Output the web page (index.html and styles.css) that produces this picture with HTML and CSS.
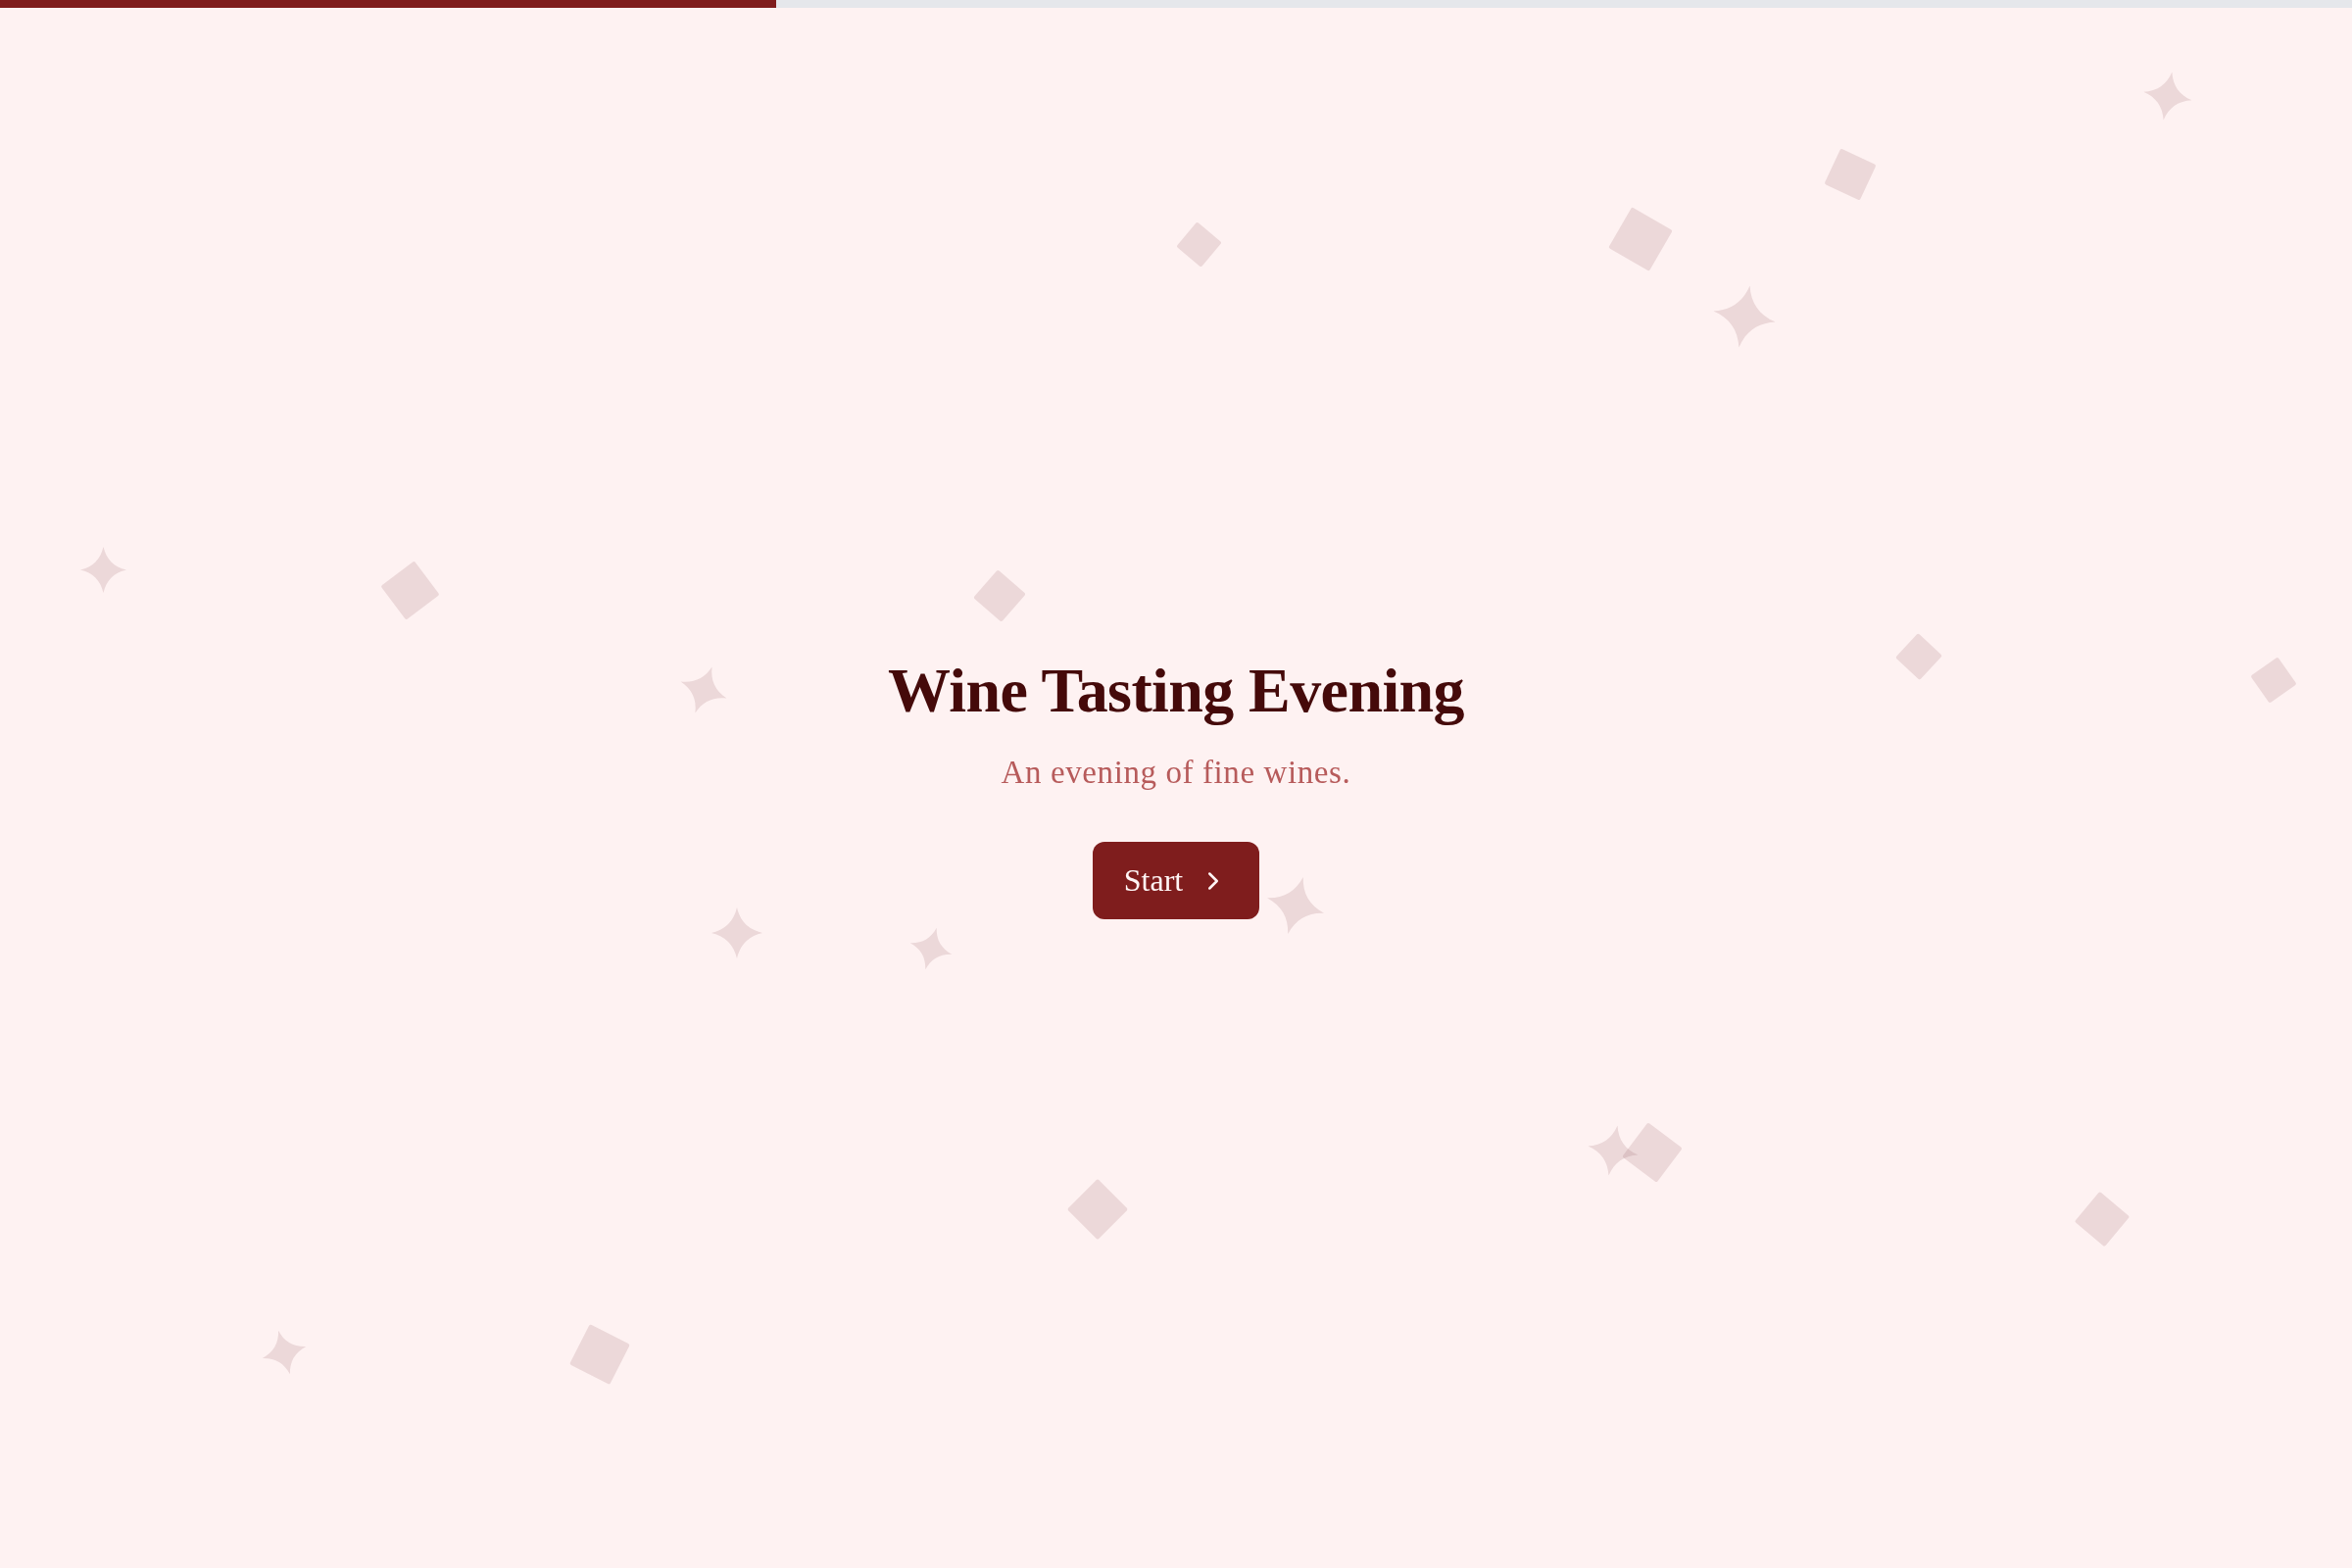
FILE: index.html
```html
<!DOCTYPE html>
<html lang="en">
<head>
    <meta charset="UTF-8">
    <meta name="viewport" content="width=device-width, initial-scale=1.0">
    <title>Wine Tasting Evening</title>
    <link rel="stylesheet" href="styles.css">
</head>
<body>
    <div class="progress">
        <div class="progress-fill"></div>
    </div>
    <div class="confetti" id="confetti"></div>
    <main class="intro">
        <h1>Wine Tasting Evening</h1>
        <p class="subtitle">An evening of fine wines.</p>
        <button class="start-btn">
            Start
            <svg viewBox="0 0 24 24" width="30" height="30" fill="none" stroke="currentColor" stroke-width="2" stroke-linecap="round" stroke-linejoin="round"><path d="m9 18 6-6-6-6"/></svg>
        </button>
    </main>
    <script>
        // [x, y, size, rotation] - centre of each shape
        const sparkles = [
            [2212, 98, 50, 10],
            [1780, 323, 64, 10],
            [105, 581, 47, 0],
            [718, 704, 50, 20],
            [1322, 924, 60, 15],
            [752, 952, 52, 0],
            [950, 968, 44, 15],
            [1646, 1174, 52, 10],
            [290, 1380, 46, -15]
        ];
        const squares = [
            [1888, 178, 40, 25],
            [1674, 244, 48, 30],
            [1223, 249, 33, 40],
            [418, 602, 43, 53],
            [1020, 608, 38, 41],
            [1958, 670, 34, 43],
            [2320, 694, 34, -35],
            [1686, 1176, 44, 37],
            [1120, 1234, 44, 45],
            [2145, 1244, 40, 40],
            [612, 1382, 46, 27]
        ];

        const layer = document.getElementById('confetti');

        function place(el, [x, y, size, rot]) {
            el.style.left = (x - size / 2) + 'px';
            el.style.top = (y - size / 2) + 'px';
            el.style.width = size + 'px';
            el.style.height = size + 'px';
            el.style.transform = `rotate(${rot}deg)`;
            layer.appendChild(el);
        }

        squares.forEach(s => {
            let el = document.createElement('div');
            el.className = 'shape square';
            place(el, s);
        });

        sparkles.forEach(s => {
            let el = document.createElement('div');
            el.className = 'shape sparkle';
            el.innerHTML = '<svg viewBox="0 0 24 24"><path d="M12 0C13.5 6.5 17.5 10.5 24 12C17.5 13.5 13.5 17.5 12 24C10.5 17.5 6.5 13.5 0 12C6.5 10.5 10.5 6.5 12 0Z"/></svg>';
            place(el, s);
        });
    </script>
</body>
</html>
```

FILE: styles.css
```css
body {
    margin: 0;
    height: 100vh;
    display: flex;
    flex-direction: column;
    background-color: #fef2f2;
    font-family: 'Liberation Serif', 'Times New Roman', serif;
    overflow: hidden;
}
.progress {
    height: 8px;
    background-color: #e5e7eb;
    position: relative;
    z-index: 2;
}
.progress-fill {
    width: 33%;
    height: 100%;
    background-color: #7f1d1d;
}
.confetti {
    position: fixed;
    inset: 0;
    pointer-events: none;
    z-index: 0;
}
.shape {
    position: absolute;
    opacity: 0.13;
}
.square {
    background-color: #722f37;
    border-radius: 2px;
}
.sparkle svg {
    display: block;
    width: 100%;
    height: 100%;
    fill: #722f37;
}
.intro {
    flex: 1;
    display: flex;
    flex-direction: column;
    align-items: center;
    justify-content: center;
    text-align: center;
    position: relative;
    z-index: 1;
}
h1 {
    margin: 0;
    font-size: 64px;
    line-height: 1.1;
    font-weight: 700;
    letter-spacing: -0.6px;
    color: #450a0a;
}
.subtitle {
    margin: 25px 0 0;
    font-size: 33px;
    line-height: 1.4;
    letter-spacing: 0.6px;
    color: #b75b5b;
}
.start-btn {
    margin-top: 48px;
    display: flex;
    align-items: center;
    gap: 16px;
    padding: 17px 32px;
    border: none;
    border-radius: 12px;
    background-color: #7f1d1d;
    color: #fff5f5;
    font-family: inherit;
    font-size: 32px;
    line-height: 45px;
    cursor: pointer;
    transition: background-color 0.3s ease;
}
.start-btn:hover {
    background-color: #991b1b;
}
.start-btn svg {
    display: block;
}
```
